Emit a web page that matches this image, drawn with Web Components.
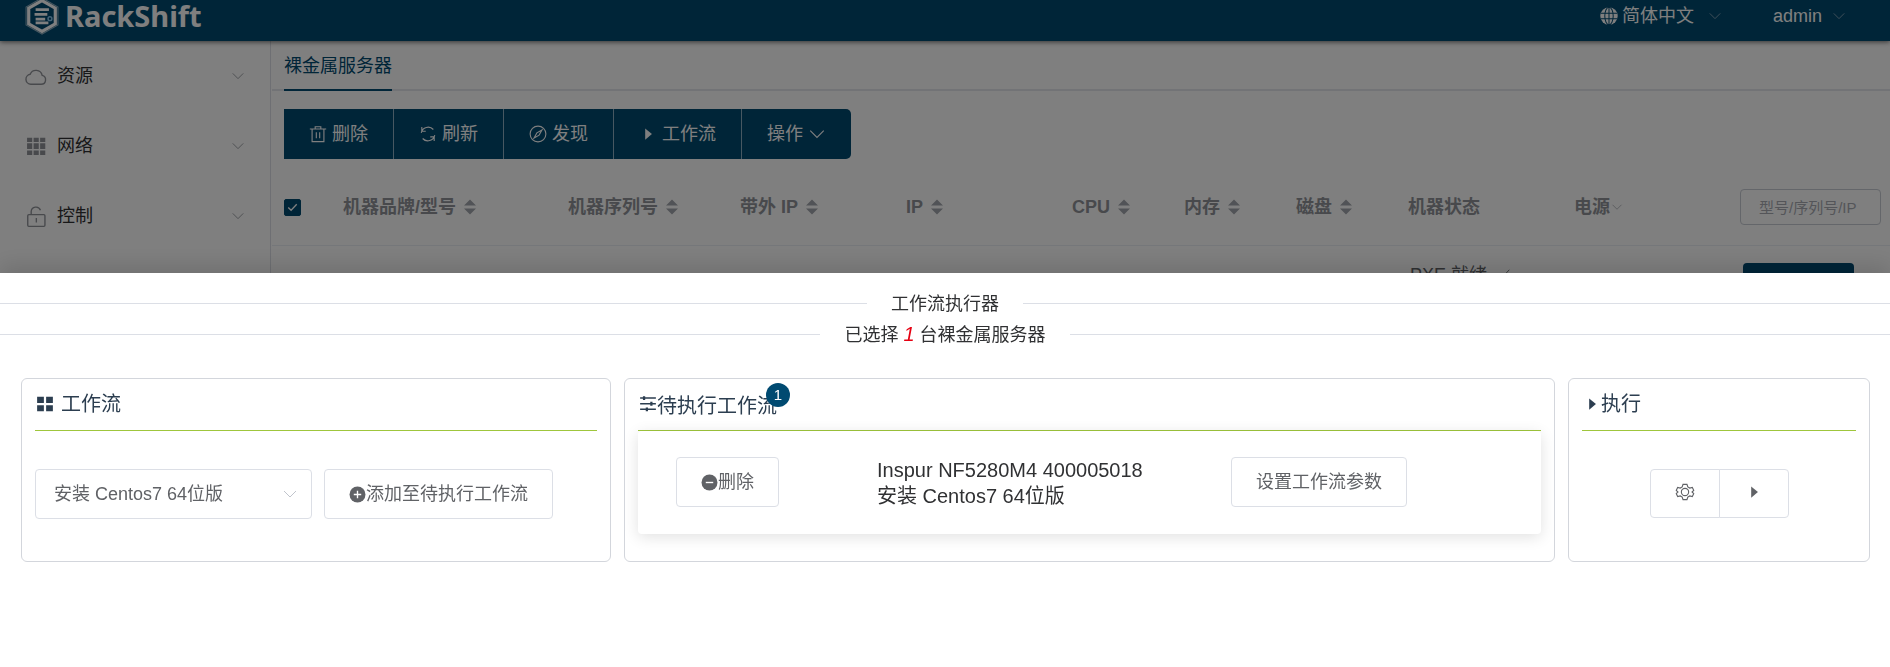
<!DOCTYPE html>
<html lang="zh-CN">
<head>
<meta charset="utf-8">
<title>RackShift</title>
<style>
  html, body { margin: 0; height: 100%; }
  body {
    --brand: #004a71;
    --ui: "Liberation Sans", "Noto Sans CJK SC", sans-serif;
    font: 400 18px/24px var(--ui);
    color: #303133;
    background: #fff;
    overflow: hidden;
  }
</style>
</head>
<body>
<rs-app></rs-app>
<script>
const ICONS = {
  logo: '<path d="M16 -1 31 7.500V24.500L16 33 1 24.500V7.500Z" fill="none" stroke="#fff" stroke-opacity=".55" stroke-width="1"/><path d="M16 1.500 28.500 8.700V23.300L16 30.500 3.500 23.300V8.700Z" fill="none" stroke="#fff" stroke-width="3"/><path d="M10 10h12.500M9 14.500h12M10 19h9M10 22.500h12" stroke="#fff" stroke-width="2.600" fill="none"/><circle cx="23.500" cy="18.500" r="1.800" fill="none" stroke="#8cc8f0" stroke-width="1.400"/>',
  cloud: '<path d="M8.500 28h15a6.500 6.500 0 0 0 1.500-12.800A9.200 9.200 0 0 0 7.500 13.500 7.300 7.300 0 0 0 8.500 28Z"/>',
  grid9: '<path fill="currentColor" stroke="none" d="M3 4h7.500v6H3zM12.500 4h7.500v6h-7.500zM22 4h7.500v6H22zM3 12h7.500v8.500H3zM12.500 12h7.500v8.500h-7.500zM22 12h7.500v8.500H22zM3 22.500h7.500v6.500H3zM12.500 22.500h7.500v6.500h-7.500zM22 22.500h7.500v6.500H22z"/>',
  unlock: '<rect x="4" y="14" width="25" height="17" rx="1.500"/><path d="M9 14V9.500a7 7 0 0 1 13.500-2M16.500 19v6.500"/>',
  down: '<path d="M4 10 16 22 28 10"/>',
  edit: '<path d="M6 28 28 4"/>',
  trash: '<path d="M1.500 7h29M5.500 7v22.500h21V7M11 7V3h10v4M13 13v10.500M19 13v10.500"/>',
  refresh: '<path d="M28 18A12.500 12.500 0 0 1 6.500 24M4 14A12.500 12.500 0 0 1 25.500 8M5 3.500V11h7M27 28.500V21h-7"/>',
  compass: '<circle cx="16" cy="16" r="14"/><path d="M23 9 18 18 9 23 14 14Z"/>',
  play: '<path fill="currentColor" stroke="none" d="M11 6v20l12-10z"/>',
  globe: '<circle cx="16" cy="16" r="15.500" fill="currentColor" stroke="none"/><path stroke="#004a71" stroke-width="1.800" d="M16 0v32M1 11h30M1 21h30"/><ellipse cx="16" cy="16" rx="7.500" ry="15.500" stroke="#004a71" stroke-width="1.800"/>',
  sort: '<path fill="currentColor" stroke="none" d="M16 1 28 13H4zM16 31 4 19h24z"/>',
  grid4: '<path fill="currentColor" stroke="none" d="M2 3h12v11H2zM18 3h12v11H18zM2 18h12v11H2zM18 18h12v11H18z"/>',
  sliders: '<path d="M2 5.500h28M2 15.500h28M2 25.500h28" stroke-width="2.600"/><path fill="currentColor" stroke="none" d="M7 2h4v7H7zM20 12h4v7h-4zM12 22h4v7h-4z"/>',
  plus: '<circle cx="16" cy="16" r="15" fill="currentColor" stroke="none"/><path stroke="#fff" stroke-width="2.600" d="M9 16h14M16 9v14"/>',
  minus: '<circle cx="16" cy="16" r="15" fill="currentColor" stroke="none"/><path stroke="#fff" stroke-width="2.600" d="M9 16h14"/>',
  gear: '<circle cx="16" cy="16" r="6.500"/><path d="M12.500 2.500h7l1.500 4.500 3.500 2 4.500-1 2.500 5-3 3 3 3-2.500 5-4.500-1-3.500 2-1.500 4.500h-7l-1.500-4.500-3.500-2-4.500 1-2.500-5 3-3-3-3 2.500-5 4.500 1 3.500-2Z"/>'
};

function define(name, markup) {
  const template = document.createElement('template');
  template.innerHTML = markup;
  customElements.define(name, class extends HTMLElement {
    constructor() {
      super();
      this.attachShadow({ mode: 'open' }).append(template.content.cloneNode(true));
    }
  });
}

customElements.define('rs-icon', class extends HTMLElement {
  connectedCallback() {
    if (this.shadowRoot) return;
    const root = this.attachShadow({ mode: 'open' });
    root.innerHTML = `<style>
      :host { display: inline-block; flex: none; width: var(--size, 18px); height: var(--size, 18px); }
      svg { display: block; width: 100%; height: 100%; overflow: visible; }
    </style><svg viewBox="0 0 32 32" fill="none" stroke="currentColor" stroke-width="2" aria-hidden="true">${ICONS[this.getAttribute('name')]}</svg>`;
  }
});

define('rs-header', `<style>
  :host { display: block; position: relative; background: var(--brand); color: #fff; box-shadow: 0 1px 5px rgba(0,0,0,.6); }
  header { display: flex; align-items: center; height: 32px; padding: 0 44px 9px 25px; }
  .logo { display: flex; align-items: center; gap: 6px; color: #fff; text-decoration: none; font: 700 29px/30px "Noto Sans", sans-serif; }
  .logo rs-icon { --size: 34px; }
  nav { display: flex; margin-left: auto; gap: 51px; }
  button { display: flex; align-items: center; padding: 0; border: 0; background: none; color: inherit; font: inherit; }
  .globe { --size: 18px; margin-right: 4px; }
  .arrow { --size: 14px; color: #8fa9ba; margin-left: 10px; }
  .wide { margin-left: 14px; }
</style>
<header>
  <a class="logo" href="#"><rs-icon name="logo"></rs-icon><span>RackShift</span></a>
  <nav>
    <button><rs-icon class="globe" name="globe"></rs-icon>简体中文<rs-icon class="arrow wide" name="down"></rs-icon></button>
    <button>admin<rs-icon class="arrow" name="down"></rs-icon></button>
  </nav>
</header>`);

define('rs-menu-item', `<style>
  :host { display: block; }
  a { display: flex; align-items: center; height: 70px; padding: 0 25px; color: #303133; text-decoration: none; }
  ::slotted(rs-icon) { --size: 22px; color: #909399; margin-right: 10px; }
  .arrow { --size: 14px; margin-left: auto; color: #909399; }
</style>
<a href="#"><slot name="icon"></slot><slot></slot><rs-icon class="arrow" name="down"></rs-icon></a>`);

define('rs-sidebar', `<style>
  :host { display: block; width: 270px; flex: none; border-right: 1px solid #dcdfe6; }
</style>
<nav>
  <rs-menu-item><rs-icon slot="icon" name="cloud"></rs-icon>资源</rs-menu-item>
  <rs-menu-item><rs-icon slot="icon" name="grid9"></rs-icon>网络</rs-menu-item>
  <rs-menu-item><rs-icon slot="icon" name="unlock"></rs-icon>控制</rs-menu-item>
</nav>`);

define('rs-toolbar', `<style>
  :host { display: flex; margin: 18px 0 0 12px; }
  button { display: flex; align-items: center; gap: 5px; height: 50px; padding: 0 25px; border: 0; border-right: 1px solid #8fb0c4; background: var(--brand); color: #fff; font: inherit; }
  button:first-child { padding-left: 26px; border-radius: 5px 0 0 5px; }
  button:last-child { border-radius: 0 5px 5px 0; border-right: 0; }
</style>
<button><rs-icon name="trash"></rs-icon>删除</button>
<button><rs-icon name="refresh"></rs-icon>刷新</button>
<button><rs-icon name="compass"></rs-icon>发现</button>
<button><rs-icon name="play"></rs-icon>工作流</button>
<button>操作<rs-icon name="down"></rs-icon></button>`);

define('rs-server-table', `<style>
  :host { display: block; margin-top: 10px; }
  table { width: 100%; table-layout: fixed; border-collapse: collapse; }
  th, td { padding: 0 0 0 12px; text-align: left; white-space: nowrap; border-bottom: 1px solid #ebeef5; }
  th { height: 76px; color: #909399; font-weight: 700; }
  td { height: 86px; color: #606266; vertical-align: top; padding-top: 17px; }
  .head { display: flex; align-items: center; gap: 6px; }
  .tight { gap: 1px; }
  .head rs-icon { --size: 16px; color: #a3a7ae; }
  .head.tight rs-icon { --size: 12px; }
  .state { display: flex; align-items: center; gap: 10px; padding: 0 2px; line-height: 24px; }
  .state rs-icon { --size: 14px; }
  input[type=checkbox] { appearance: none; display: block; width: 17px; height: 17px; margin: 0; border-radius: 2px; border: 1px solid #dcdfe6; background: #fff; }
  input[type=checkbox]:checked { border-color: var(--brand); background: var(--brand) url('data:image/svg+xml,<svg xmlns="http://www.w3.org/2000/svg" viewBox="0 0 16 16"><path d="M3.500 8l3 3 6-6.500" fill="none" stroke="white" stroke-width="1.400"/></svg>'); }
  input[type=text] { box-sizing: border-box; display: block; width: calc(100% - 9px); height: 36px; padding: 0 18px; border: 1px solid #c8ccd4; border-radius: 4px; background: #fff; font: inherit; font-size: 15px; font-weight: 400; }
  input::placeholder { color: #a8abb2; opacity: 1; }
  .action { display: block; width: 111px; height: 50px; margin-left: 3px; border: 0; border-radius: 4px; background: var(--brand); }
</style>
<table>
  <colgroup><col style="width:59px"><col style="width:225px"><col style="width:172px"><col style="width:166px"><col style="width:166px"><col style="width:112px"><col style="width:112px"><col style="width:112px"><col style="width:166px"><col style="width:166px"><col></colgroup>
  <thead><tr>
    <th><input type="checkbox" checked aria-label="全选"></th>
    <th><span class="head">机器品牌/型号<rs-icon name="sort"></rs-icon></span></th>
    <th><span class="head">机器序列号<rs-icon name="sort"></rs-icon></span></th>
    <th><span class="head">带外 IP<rs-icon name="sort"></rs-icon></span></th>
    <th><span class="head">IP<rs-icon name="sort"></rs-icon></span></th>
    <th><span class="head">CPU<rs-icon name="sort"></rs-icon></span></th>
    <th><span class="head">内存<rs-icon name="sort"></rs-icon></span></th>
    <th><span class="head">磁盘<rs-icon name="sort"></rs-icon></span></th>
    <th>机器状态</th>
    <th><span class="head tight">电源<rs-icon name="down"></rs-icon></span></th>
    <th><input type="text" placeholder="型号/序列号/IP" aria-label="搜索"></th>
  </tr></thead>
  <tbody><tr>
    <td></td><td></td><td></td><td></td><td></td><td></td><td></td><td></td>
    <td><span class="state">PXE 就绪<rs-icon name="edit"></rs-icon></span></td>
    <td></td>
    <td><button class="action" aria-label="操作"></button></td>
  </tr></tbody>
</table>`);

define('rs-servers', `<style>
  :host { display: block; flex: 1; min-width: 0; padding-left: 1px; }
  .tabs { display: flex; padding-left: 12px; border-bottom: 2px solid #e4e7ed; }
  .tabs a { height: 48px; margin-bottom: -2px; border-bottom: 2px solid var(--brand); color: var(--brand); line-height: 50px; text-decoration: none; }
</style>
<div class="tabs"><a href="#">裸金属服务器</a></div>
<rs-toolbar></rs-toolbar>
<rs-server-table></rs-server-table>`);

define('rs-divider', `<style>
  :host { display: flex; align-items: center; gap: 24px; height: 31px; color: #303133; }
  :host::before, :host::after { content: ""; flex: 1; height: 1px; background: #dcdfe6; }
</style><span><slot></slot></span>`);

define('rs-card', `<style>
  :host { display: flex; flex-direction: column; box-sizing: border-box; min-width: 0; height: 184px; padding: 0 13px; border: 1px solid #d3d6dc; border-radius: 6px; background: #fff; }
  h2 { display: flex; align-items: center; box-sizing: border-box; margin: 0; height: 52px; padding-bottom: 2px; border-bottom: 1px solid #9fc63c; color: #2c3e50; font: inherit; font-size: 20px; }
  div { flex: 1; }
</style><h2><slot name="title"></slot></h2><div><slot></slot></div>`);

define('rs-button', `<style>
  :host { display: block; }
  button { display: flex; align-items: center; justify-content: center; width: 100%; height: 50px; padding: 0 24px; border: 1px solid #dcdfe6; border-radius: 4px; background: #fff; color: #606266; font: inherit; white-space: nowrap; }
  ::slotted(rs-icon) { --size: 17px; }
</style><button><slot></slot></button>`);

define('rs-drawer', `<style>
  :host { position: fixed; inset: 0; display: flex; flex-direction: column; justify-content: flex-end; background: rgba(0,0,0,.5); }
  section { height: 59%; box-sizing: border-box; padding-top: 15px; background: #fff; box-shadow: 0 -8px 20px rgba(0,0,0,.12); }
  em { color: #e60012; font-size: 20px; }
  .cards { display: grid; grid-template-columns: 590fr 931fr 302fr; gap: 13px; margin: 28px 20px 0 21px; }
  .title { display: flex; align-items: center; margin-left: 1px; }
  .gap { gap: 7px; }
  .pick { display: flex; gap: 12px; margin-top: 38px; }
  label { display: grid; align-items: center; flex: 0 0 277px; }
  label > * { grid-area: 1 / 1; }
  label rs-icon { --size: 16px; justify-self: end; margin-right: 14px; color: #c0c4cc; pointer-events: none; }
  select { appearance: none; width: 100%; height: 50px; padding: 0 18px; border: 1px solid #dcdfe6; border-radius: 4px; background: #fff; color: #606266; font: inherit; }
  .count { position: relative; padding-top: 4px; }
  .badge { position: absolute; top: -7px; right: -13px; width: 24px; height: 24px; border-radius: 12px; background: var(--brand); color: #fff; font-size: 15px; line-height: 24px; text-align: center; }
  .task { display: grid; grid-template-columns: 201fr 354fr 310fr; align-items: start; padding: 26px 0 25px 38px; border-radius: 4px; box-shadow: 0 3px 15px rgba(0,0,0,.12); }
  .task > * { justify-self: start; }
  .task p { margin: 0; font-size: 20px; line-height: 26px; }
  .run { display: flex; justify-content: center; margin-top: 38px; }
  .run button { width: 70px; height: 49px; padding: 0; border: 1px solid #dcdfe6; background: #fff; color: #606266; }
  .run button:first-child { border-radius: 4px 0 0 4px; }
  .run button:last-child { margin-left: -1px; border-radius: 0 4px 4px 0; }
</style>
<section>
  <rs-divider>工作流执行器</rs-divider>
  <rs-divider>已选择 <em>1</em> 台裸金属服务器</rs-divider>
  <div class="cards">
    <rs-card>
      <span slot="title" class="title gap"><rs-icon name="grid4"></rs-icon>工作流</span>
      <div class="pick">
        <label><select aria-label="工作流"><option>安装 Centos7 64位版</option></select><rs-icon name="down"></rs-icon></label>
        <rs-button><rs-icon name="plus"></rs-icon>添加至待执行工作流</rs-button>
      </div>
    </rs-card>
    <rs-card>
      <span slot="title" class="title"><rs-icon name="sliders"></rs-icon><span class="count">待执行工作流<span class="badge">1</span></span></span>
      <div class="task">
        <rs-button><rs-icon name="minus"></rs-icon>删除</rs-button>
        <p>Inspur NF5280M4 400005018<br>安装 Centos7 64位版</p>
        <rs-button>设置工作流参数</rs-button>
      </div>
    </rs-card>
    <rs-card>
      <span slot="title" class="title"><rs-icon name="play"></rs-icon>执行</span>
      <div class="run">
        <button aria-label="设置"><rs-icon name="gear"></rs-icon></button><button aria-label="执行"><rs-icon name="play"></rs-icon></button>
      </div>
    </rs-card>
  </div>
</section>`);

define('rs-app', `<style>
  :host { display: block; height: 100%; overflow: hidden; }
  main { display: flex; height: 100%; }
</style>
<rs-header></rs-header>
<main><rs-sidebar></rs-sidebar><rs-servers></rs-servers></main>
<rs-drawer></rs-drawer>`);
</script>
</body>
</html>
